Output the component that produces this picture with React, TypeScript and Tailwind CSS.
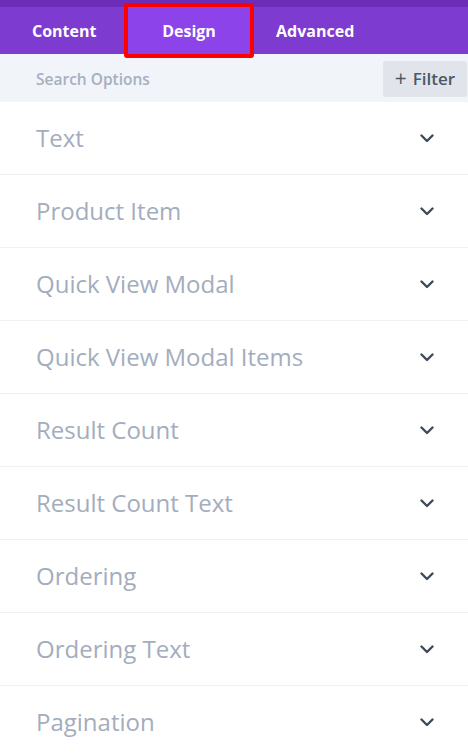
import React from "react";

const items = [
  "Text",
  "Product Item",
  "Quick View Modal",
  "Quick View Modal Items",
  "Result Count",
  "Result Count Text",
  "Ordering",
  "Ordering Text",
  "Pagination",
];

function Chevron() {
  return (
    <svg width="14" height="9" viewBox="0 0 14 9" fill="none">
      <path d="M1.5 1.5L7 7L12.5 1.5" stroke="#3e4a59" strokeWidth="2.4" strokeLinecap="round" strokeLinejoin="round" />
    </svg>
  );
}

export default function App() {
  return (
    <div className="w-[468px] h-[756px] overflow-hidden bg-white" style={{ fontFamily: '"Open Sans", sans-serif' }}>
      <div className="h-[7px] bg-[#6c2eb9]" />
      <div className="h-[47px] bg-[#7e3bd0] flex items-stretch text-white font-bold text-[16px]">
        <div className="w-[128px] pl-8 flex items-center">Content</div>
        <div className="relative w-[122px] flex items-center justify-center bg-[#8c43ea]">
          Design
          <div className="absolute left-[-4px] right-[-4px] top-[-4px] bottom-[-4px] border-4 border-[#ff0000] rounded-[3px]" />
        </div>
        <div className="pl-[26px] flex items-center">Advanced</div>
      </div>
      <div className="h-[48px] bg-[#f1f4f8] flex items-center justify-between pl-9 pr-px">
        <span className="text-[15.5px] font-semibold text-[#a6b0bf] mt-[3px]">Search Options</span>
        <div className="w-[84px] h-9 rounded-[3px] bg-[#e1e5eb] flex items-center justify-center gap-[6px] text-[17px] font-semibold text-[#4c5866] mt-[2px]">
          <span className="text-[21px] font-normal leading-none mt-[-2px]">+</span>
          <span>Filter</span>
        </div>
      </div>
      {items.map((t) => (
        <div key={t} className="h-[73px] border-b border-[#eff1f4] flex items-center justify-between pl-9 pr-[34px]">
          <span className="text-[24px] text-[#a3adbd]">{t}</span>
          <Chevron />
        </div>
      ))}
    </div>
  );
}
